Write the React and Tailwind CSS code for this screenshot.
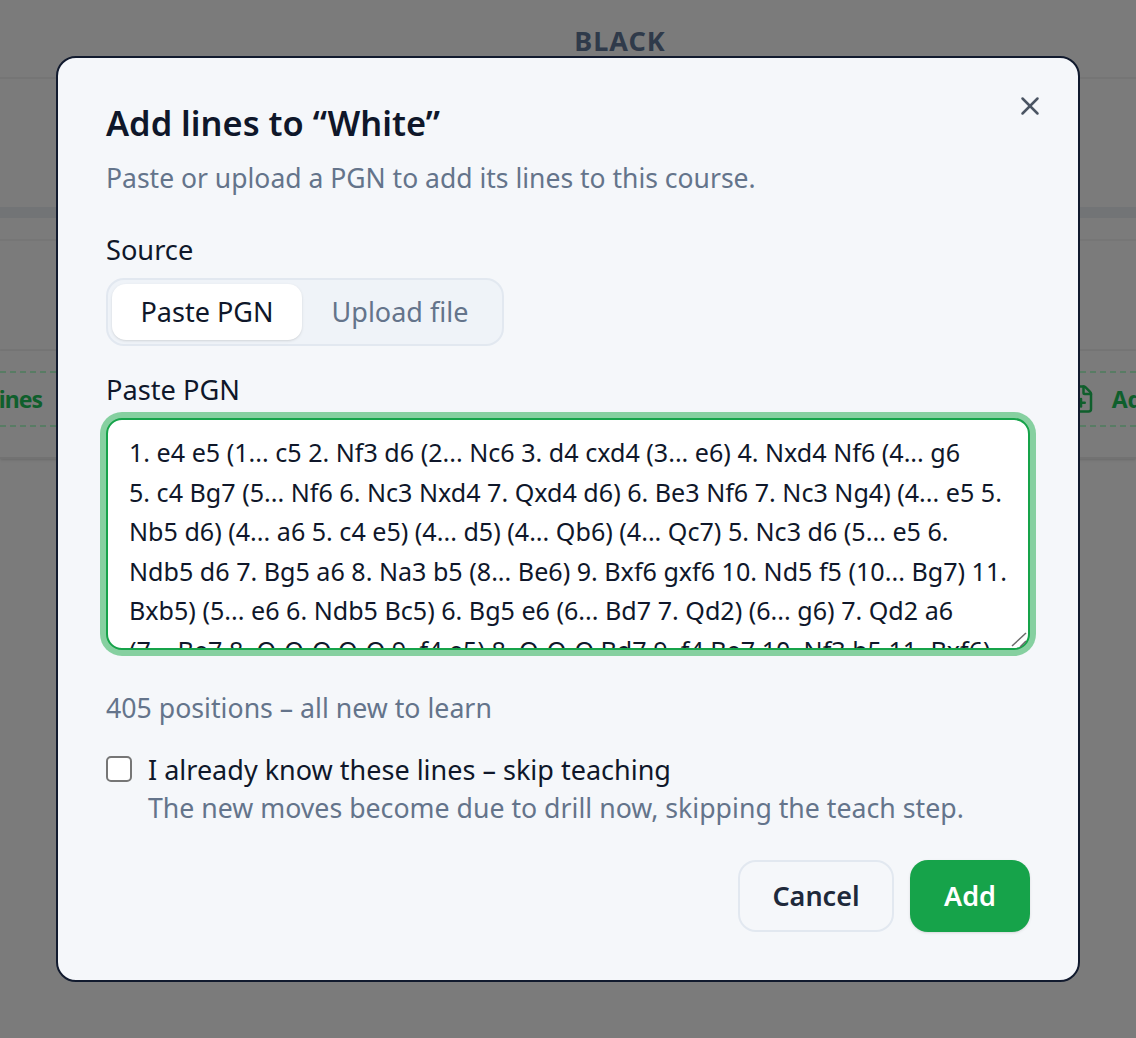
import { X, FilePlus } from 'lucide-react'

const PGN = `1. e4 e5 (1... c5 2. Nf3 d6 (2... Nc6 3. d4 cxd4 (3... e6) 4. Nxd4 Nf6 (4... g6
5. c4 Bg7 (5... Nf6 6. Nc3 Nxd4 7. Qxd4 d6) 6. Be3 Nf6 7. Nc3 Ng4) (4... e5 5.
Nb5 d6) (4... a6 5. c4 e5) (4... d5) (4... Qb6) (4... Qc7) 5. Nc3 d6 (5... e5 6.
Ndb5 d6 7. Bg5 a6 8. Na3 b5 (8... Be6) 9. Bxf6 gxf6 10. Nd5 f5 (10... Bg7) 11.
Bxb5) (5... e6 6. Ndb5 Bc5) 6. Bg5 e6 (6... Bd7 7. Qd2) (6... g6) 7. Qd2 a6
(7... Be7 8. O-O-O O-O 9. f4 e5) 8. O-O-O Bd7 9. f4 Be7 10. Nf3 b5 11. Bxf6)`

function Backdrop() {
  return (
    <div className="h-[1038px] bg-[#7b7b7b] overflow-hidden">
      <div className="h-[79px] border-b-2 border-[#757575] flex justify-center pt-[24px] pl-[104px]">
        <span className="text-[27px] leading-[34px] font-bold tracking-[1px] text-[#2f3a4a]">BLACK</span>
      </div>
      <div className="h-[128px]" />
      <div className="h-[11px] bg-[#727476]" />
      <div className="h-[23px] border-b-2 border-[#767676]" />
      <div className="h-[110px] border-b-2 border-[#767676]" />
      <div className="h-[108px] border-b-2 border-[#727272] pt-[20px] shadow-sm">
        <div className="h-[56px] border-y-2 border-dashed border-[#587c64] flex items-center justify-between text-[#0f5f2c] text-[23px] font-bold">
          <span className="-ml-[54px] tracking-[-1px]">Add lines</span>
          <span className="flex items-center gap-[16px] -mr-[63px]">
            <FilePlus size={30} strokeWidth={2} />
            Add file
          </span>
        </div>
      </div>
    </div>
  )
}

export default function App() {
  return (
    <div className="relative font-['Noto_Sans',sans-serif] text-[#0f172a]">
      <Backdrop />
      <div className="absolute left-[56px] top-[56px] w-[1024px] h-[926px] bg-[#f5f7fa] border-2 border-[#111a2e] rounded-[20px] px-[48px] pt-[43px]">
        <button className="absolute right-[33px] top-[33px] text-[#4b5563]">
          <X size={30} strokeWidth={2} />
        </button>
        <h2 className="text-[34.4px] leading-[44px] font-semibold">Add lines to “White”</h2>
        <p className="mt-[13px] text-[26.5px] leading-[40px] text-[#64748b]">Paste or upload a PGN to add its lines to this course.</p>

        <div className="mt-[33px] text-[27.2px] leading-[38px]">Source</div>
        <div className="mt-[9px] inline-flex p-[4px] bg-[#eff3f8] border-2 border-[#e2e8f0] rounded-[18px] text-[27px]">
          <div className="w-[190px] h-[56px] flex items-center justify-center bg-white rounded-[14px] shadow-sm">Paste PGN</div>
          <div className="w-[196px] h-[56px] flex items-center justify-center text-[#64748b]">Upload file</div>
        </div>

        <div className="mt-[25px] text-[27.2px] leading-[38px]">Paste PGN</div>
        <div className="relative mt-[9px] w-[924px]">
          <textarea
            readOnly
            defaultValue={PGN}
            className="block w-full h-[232px] px-[21px] py-[13px] bg-white border-2 border-[#16a34a] ring-[6px] ring-[#86d0a0] rounded-[16px] text-[25.1px] leading-[39.6px] whitespace-pre overflow-hidden resize-none outline-none"
          />
          {/* resize grip */}
          <svg className="absolute right-[2px] bottom-[2px]" width="18" height="18" viewBox="0 0 18 18" fill="none" stroke="#6b6b6b" strokeWidth="1.5">
            <path d="M2 16 L16 3" />
            <path d="M10 17 L16 11" />
          </svg>
        </div>

        <p className="mt-[38px] text-[26.7px] leading-[40px] text-[#64748b]">405 positions – all new to learn</p>

        <div className="mt-[23px] flex gap-[16px]">
          <input type="checkbox" className="mt-[5px] w-[26px] h-[26px] shrink-0 appearance-none bg-white border-2 border-[#767676] rounded-[5px]" />
          <div>
            <div className="text-[27px] leading-[38px]">I already know these lines – skip teaching</div>
            <div className="text-[26.7px] leading-[38px] text-[#64748b]">The new moves become due to drill now, skipping the teach step.</div>
          </div>
        </div>

        <div className="mt-[33px] flex justify-end gap-[16px] text-[27px] font-semibold">
          <button className="w-[156px] h-[72px] border-2 border-[#e2e8f0] rounded-[18px] text-[#1e293b]">Cancel</button>
          <button className="w-[120px] h-[72px] bg-[#16a34a] rounded-[18px] text-white shadow-sm">Add</button>
        </div>
      </div>
    </div>
  )
}
